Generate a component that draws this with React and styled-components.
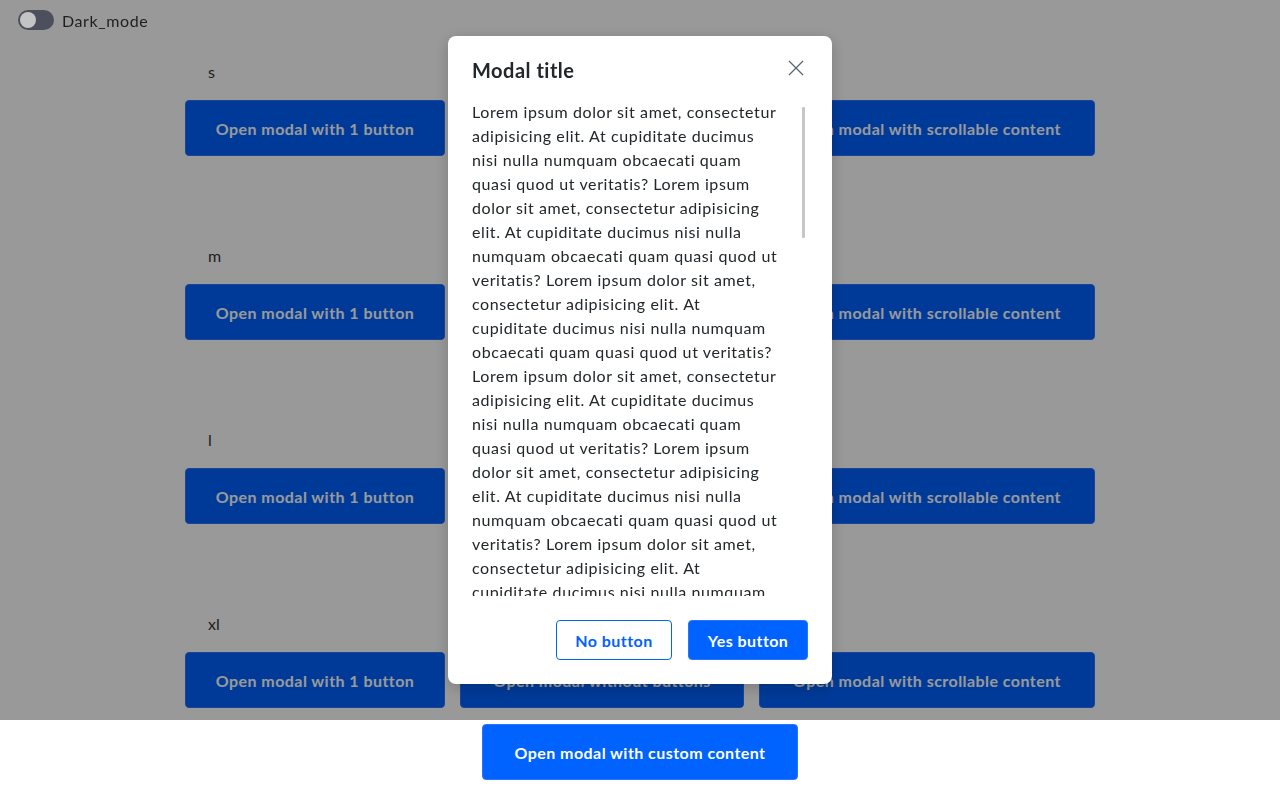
import React from "react";
import styled, { createGlobalStyle } from "styled-components";

const GlobalStyle = createGlobalStyle`
  html, body {
    margin: 0;
    padding: 0;
    background: #ffffff;
    font-family: Lato, "Open Sans", sans-serif;
    color: #333333;
  }
  * {
    box-sizing: border-box;
  }
`;

const Page = styled.div`
  min-height: 804px;
`;

const Header = styled.div`
  position: relative;
  z-index: 20;
  height: 40px;
  padding: 0 18px;
  display: flex;
  align-items: center;
  gap: 8px;
`;

const Toggle = styled.span`
  width: 36px;
  height: 20px;
  border-radius: 10px;
  background: #4b505c;
  display: flex;
  align-items: center;
  padding: 0 2px;
`;

const Knob = styled.span`
  width: 16px;
  height: 16px;
  border-radius: 50%;
  background: #c4c4c4;
`;

const ToggleLabel = styled.span`
  font-size: 16px;
  letter-spacing: 0.6px;
  color: #1f1f1f;
`;

const Main = styled.main`
  padding-top: 20px;
  display: flex;
  flex-direction: column;
  align-items: center;
`;

const Sections = styled.div`
  display: flex;
  flex-direction: column;
  gap: 88px;
`;

const Section = styled.section`
  display: flex;
  flex-direction: column;
  gap: 16px;
`;

const SizeLabel = styled.div`
  padding-left: 23px;
  font-size: 16px;
  line-height: 24px;
  color: #333333;
`;

const ButtonRow = styled.div`
  display: flex;
  gap: 15px;
`;

const Button = styled.button`
  height: ${(p) => (p.$small ? "40px" : "56px")};
  padding: 0 ${(p) => (p.$small ? "16px" : "24px")};
  min-width: ${(p) => p.$width || "0"};
  border-radius: 4px;
  border: 1px solid ${(p) => (p.$ghost ? "#0062ff" : "#2b74ff")};
  background: ${(p) => (p.$ghost ? "#ffffff" : "#0062ff")};
  color: ${(p) => (p.$ghost ? "#0062ff" : "#ffffff")};
  font-family: Lato, "Open Sans", sans-serif;
  font-size: 16px;
  font-weight: 700;
  letter-spacing: 0.45px;
  cursor: pointer;
  white-space: nowrap;
`;

const CustomButton = styled(Button)`
  margin-top: 16px;
`;

const Overlay = styled.div`
  position: fixed;
  top: 0;
  left: 0;
  right: 0;
  height: 720px;
  background: rgba(0, 0, 0, 0.4);
  z-index: 10;
`;

const Modal = styled.div`
  position: absolute;
  top: 36px;
  left: 50%;
  transform: translateX(-50%);
  width: 384px;
  height: 648px;
  background: #ffffff;
  border-radius: 8px;
  box-shadow: 0 4px 16px rgba(0, 0, 0, 0.2);
  padding: 20px 24px 24px;
  display: flex;
  flex-direction: column;
`;

const ModalHeader = styled.div`
  display: flex;
  justify-content: space-between;
  align-items: center;
  height: 28px;
  margin-bottom: 16px;
`;

const ModalTitle = styled.h2`
  margin: 0;
  font-size: 20px;
  line-height: 28px;
  font-weight: 700;
  letter-spacing: 0.5px;
  color: #21272a;
`;

const CloseButton = styled.button`
  align-self: flex-start;
  border: none;
  background: none;
  padding: 0;
  width: 24px;
  height: 24px;
  display: flex;
  align-items: center;
  justify-content: center;
  cursor: pointer;
`;

const BodyWrap = styled.div`
  position: relative;
  flex: 1;
  min-height: 0;
  display: flex;
`;

const ModalBody = styled.div`
  flex: 1;
  overflow-y: auto;
  padding-right: 28px;
  font-size: 16px;
  line-height: 24px;
  letter-spacing: 0.6px;
  color: #21272a;
  scrollbar-width: none;

  &::-webkit-scrollbar {
    display: none;
  }
`;

const ScrollThumb = styled.div`
  position: absolute;
  top: 7px;
  right: 3px;
  width: 3px;
  height: 131px;
  border-radius: 1px;
  background: #c6c6c6;
`;

const ModalFooter = styled.div`
  margin-top: 24px;
  display: flex;
  justify-content: flex-end;
  gap: 16px;
`;

const sizes = ["s", "m", "l", "xl"];
const lorem =
  "Lorem ipsum dolor sit amet, consectetur adipisicing elit. At cupiditate ducimus nisi nulla numquam obcaecati quam quasi quod ut veritatis? ";

const App = () => {
  return (
    <Page>
      <GlobalStyle />
      <Header>
        <Toggle>
          <Knob />
        </Toggle>
        <ToggleLabel>Dark_mode</ToggleLabel>
      </Header>
      <Main>
        <Sections>
          {sizes.map((size) => (
            <Section key={size}>
              <SizeLabel>{size}</SizeLabel>
              <ButtonRow>
                <Button $width="260px">Open modal with 1 button</Button>
                <Button $width="284px">Open modal without buttons</Button>
                <Button $width="336px">Open modal with scrollable content</Button>
              </ButtonRow>
            </Section>
          ))}
        </Sections>
        <CustomButton $width="316px">Open modal with custom content</CustomButton>
      </Main>
      <Overlay>
        <Modal>
          <ModalHeader>
            <ModalTitle>Modal title</ModalTitle>
            <CloseButton aria-label="close">
              <svg width="16" height="16" viewBox="0 0 16 16" fill="none">
                <path d="M1 1L15 15M15 1L1 15" stroke="#5a6872" strokeWidth="1.3" />
              </svg>
            </CloseButton>
          </ModalHeader>
          <BodyWrap>
            <ModalBody>{lorem.repeat(16)}</ModalBody>
            <ScrollThumb />
          </BodyWrap>
          <ModalFooter>
            <Button $small $ghost $width="116px">No button</Button>
            <Button $small $width="120px">Yes button</Button>
          </ModalFooter>
        </Modal>
      </Overlay>
    </Page>
  );
};

export default App;
